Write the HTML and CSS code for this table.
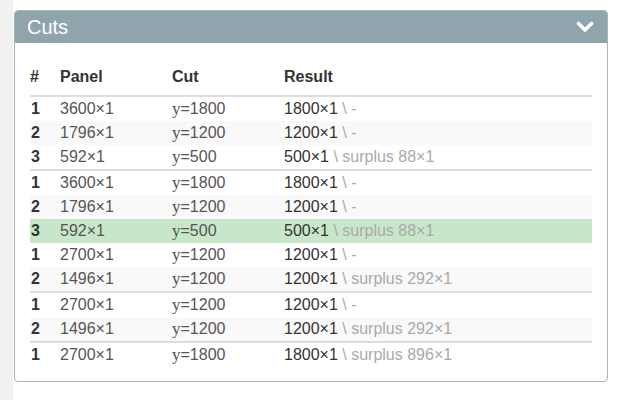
FILE: index.html
```html
<!DOCTYPE html>
<html>
<head>
<meta charset="utf-8">
<link rel="stylesheet" href="styles.css">
</head>
<body>
<div class="layout">
  <div class="sidebar"></div>
  <main class="main">
    <section class="panel">
      <header class="panel-head">
        <h2 class="panel-title">Cuts</h2>
        <svg class="chev" width="18" height="12" viewBox="0 0 18 12"><polyline points="2.5,2.5 9,9 15.5,2.5" fill="none" stroke="#fff" stroke-width="3.6" stroke-linecap="round" stroke-linejoin="round"/></svg>
      </header>
      <div class="panel-body">
        <table class="cuts">
          <thead>
            <tr><th class="c-n">#</th><th class="c-p">Panel</th><th class="c-c">Cut</th><th>Result</th></tr>
          </thead>
          <tbody>
            <tr><td class="n">1</td><td>3600×1</td><td><span class="v">y</span>=1800</td><td>1800×1 <span class="s">\ -</span></td></tr>
            <tr class="odd"><td class="n">2</td><td>1796×1</td><td><span class="v">y</span>=1200</td><td>1200×1 <span class="s">\ -</span></td></tr>
            <tr><td class="n">3</td><td>592×1</td><td><span class="v">y</span>=500</td><td>500×1 <span class="s">\ surplus 88×1</span></td></tr>
          </tbody>
          <tbody>
            <tr><td class="n">1</td><td>3600×1</td><td><span class="v">y</span>=1800</td><td>1800×1 <span class="s">\ -</span></td></tr>
            <tr class="odd"><td class="n">2</td><td>1796×1</td><td><span class="v">y</span>=1200</td><td>1200×1 <span class="s">\ -</span></td></tr>
            <tr class="ok"><td class="n">3</td><td>592×1</td><td><span class="v">y</span>=500</td><td>500×1 <span class="s">\ surplus 88×1</span></td></tr>
            <tr><td class="n">1</td><td>2700×1</td><td><span class="v">y</span>=1200</td><td>1200×1 <span class="s">\ -</span></td></tr>
            <tr class="odd"><td class="n">2</td><td>1496×1</td><td><span class="v">y</span>=1200</td><td>1200×1 <span class="s">\ surplus 292×1</span></td></tr>
          </tbody>
          <tbody>
            <tr><td class="n">1</td><td>2700×1</td><td><span class="v">y</span>=1200</td><td>1200×1 <span class="s">\ -</span></td></tr>
            <tr class="odd"><td class="n">2</td><td>1496×1</td><td><span class="v">y</span>=1200</td><td>1200×1 <span class="s">\ surplus 292×1</span></td></tr>
          </tbody>
          <tbody>
            <tr><td class="n">1</td><td>2700×1</td><td><span class="v">y</span>=1800</td><td>1800×1 <span class="s">\ surplus 896×1</span></td></tr>
          </tbody>
        </table>
      </div>
    </section>
  </main>
</div>
</body>
</html>
```

FILE: styles.css
```css
* { box-sizing: border-box; }
html, body { margin: 0; padding: 0; }
body {
  font-family: "Liberation Sans", Arial, sans-serif;
  font-size: 16px;
  color: #333;
  background: #fff;
}
.layout { display: flex; min-height: 400px; }
.sidebar { width: 13px; background: #f1f1f1; flex: none; }
.main { flex: none; padding: 10px 0 0 1px; }
.panel {
  width: 594px;
  border: 1px solid #a6b5bc;
  border-radius: 4px;
  background: #fff;
}
.panel-head {
  height: 32px;
  background: #90a4ae;
  border-radius: 3px 3px 0 0;
  display: flex;
  align-items: center;
  justify-content: space-between;
  padding: 0 13px 0 12px;
}
.panel-title {
  margin: 0;
  font-size: 20px;
  font-weight: normal;
  color: #fff;
  line-height: 22px;
}
.chev { display: block; margin-top: -1px; }
.panel-body { padding: 15px 15px 14px 15px; }
.cuts { width: 100%; border-collapse: collapse; border-spacing: 0; }
.cuts th {
  text-align: left;
  font-weight: bold;
  line-height: 20px;
  padding: 9px 0 8px 0;
  border-bottom: 2px solid #dddddd;
}
.cuts td {
  line-height: 20px;
  padding: 2px 0;
  color: #555;
}
.c-n { width: 30px; }
.c-p { width: 112px; }
.c-c { width: 112px; }
.cuts td.n { font-weight: bold; color: #333; padding-left: 1px; }
.cuts td:last-child { color: #333; }
.v { font-family: "Liberation Serif", "Times New Roman", serif; font-size: 17px; }
.s { color: #aaa; }
.cuts tbody + tbody { border-top: 2px solid #dddddd; }
.cuts tr.odd td { background: #f9f9f9; }
.cuts tr.ok td { background: #c8e6c9; }
```
